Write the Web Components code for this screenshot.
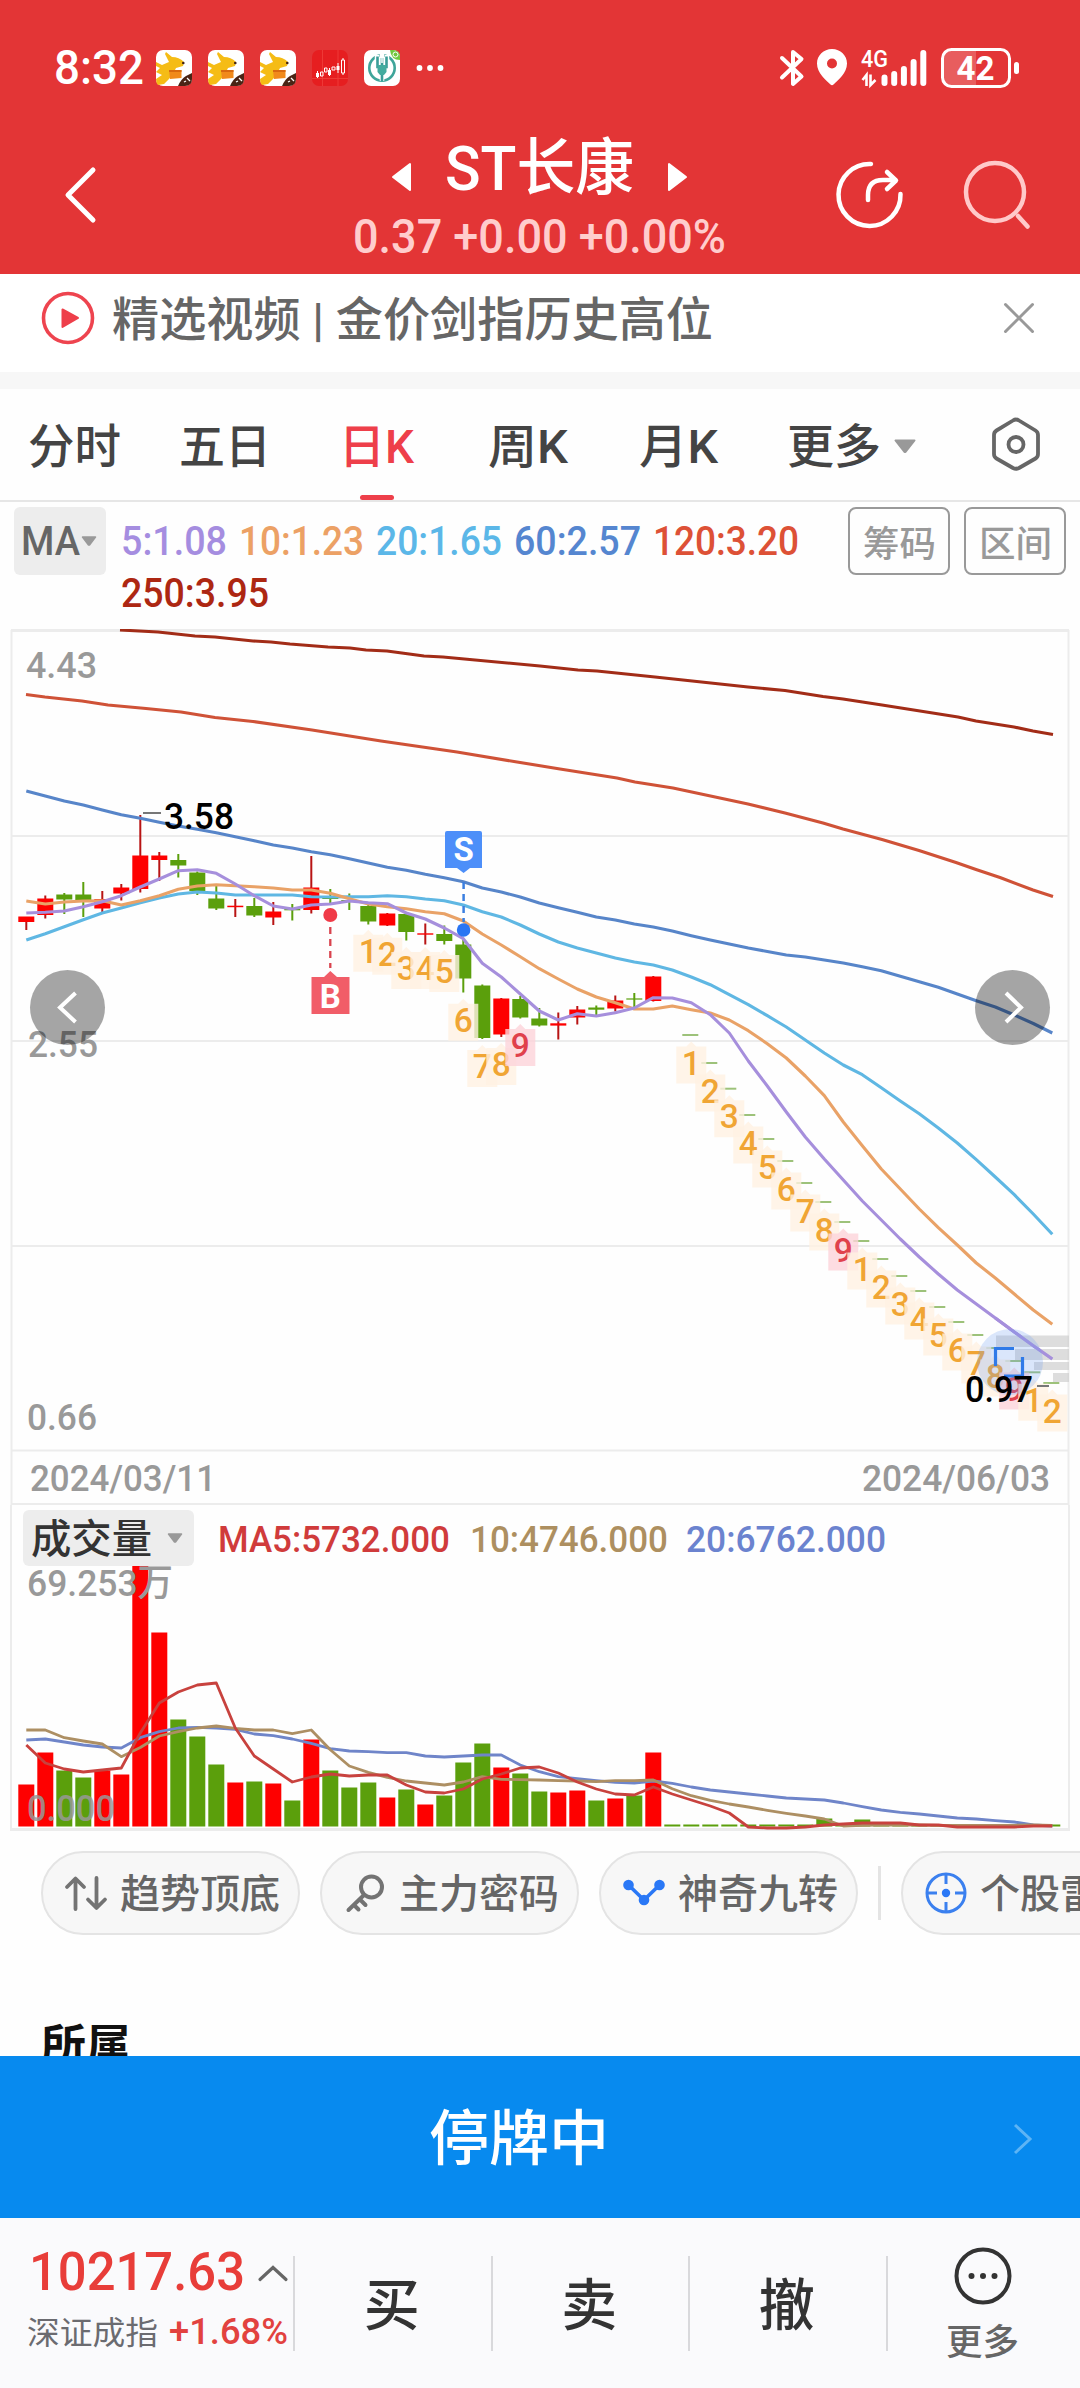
<!DOCTYPE html>
<html lang="zh-CN">
<head>
<meta charset="utf-8">
<title>ST长康</title>
<style>
    body {
        margin: 0;
        width: 1080px;
        height: 2388px;
        overflow: hidden;
        background: #fefefe;
        font-family: Roboto, "Noto Sans CJK SC", sans-serif;
        font-weight: 500;
    }
</style>
</head>
<body>
<stock-page></stock-page>

<script>
const ICONS = {
    courier: [36, 36, `<rect width="36" height="36" rx="7" fill="#fff"/>
        <path d="M0 12 L6 15 L13 12 L9 4 L10 2 L16 7 Q23 7 28 12 L27 16 L20 18 L17 24 L13 29 L8 34 L2 35 Q0 33 0 29 L6 25 L0 22 L4 18 L0 16Z" fill="#f5bc15"/>
        <path d="M13 20 H25.500 V28 L14 29Z" fill="#f18a1b"/><path d="M13 20 H25.500 V22 H13Z" fill="#d9690f"/>
        <circle cx="27.300" cy="13" r="1.300" fill="#402015"/>
        <path d="M36 23 V29 Q36 36 29 36 H22 Q25 29 30 26Z" fill="#4a2415"/><path d="M28 32 l2 -1 M31 28 l3 3" stroke="#fff" stroke-width="1.300"/>`],
    stocks: [36, 36, `<rect width="36" height="36" rx="7" fill="#e61e20"/>
        <path d="M10.500 0 V36 M26 0 V36 M0 28.500 H36" stroke="#f0403c" stroke-width=".8"/>
        <path d="M4 23 h3 v4 h-3z M16 20 h3 v5 h-3z M24.500 16 h3 v4 h-3z" fill="#fff"/>
        <path d="M8.500 22 h2.500 v4 h-2.500z M12.500 18 h2.500 v4 h-2.500z M20 17 h3 v3 h-3z M29.500 10 h3 v13 h-3z M5.500 21 v7 M17.500 18 v8 M26 13 v10 M31 8 v2 M31 23 v2" fill="none" stroke="#fff" stroke-width="1"/>`],
    bank: [36, 36, `<rect width="36" height="36" rx="7" fill="#fff"/>
        <circle cx="18" cy="18" r="12.700" fill="none" stroke="#3fa59a" stroke-width="2.600"/>
        <path d="M13 5 V17 H23 V5 M18 3 V31 M14.500 17 V23 H21.500 V17" fill="none" stroke="#fff" stroke-width="4.500"/>
        <path d="M13.500 6.500 V17 H22.500 V6.500 M18 8 V31" fill="none" stroke="#3a9d98" stroke-width="2.600"/>
        <path d="M13.500 15 H22.500 V22 L20 25 H16 L13.500 22Z" fill="#43ab9e"/><path d="M18 5 V13" stroke="#fff" stroke-width="1.500"/>
        <path d="M26 0 H29 Q36 0 36 7 V10 Q27 10 26 0Z" fill="#72c83f"/><circle cx="31.500" cy="4.500" r="2.500" fill="none" stroke="#fff" stroke-width="1"/>`],
    dots: [28, 8, `<g fill="#fff"><circle cx="3.500" cy="4" r="2.900"/><circle cx="14" cy="4" r="2.900"/><circle cx="24.500" cy="4" r="2.900"/></g>`],
    bluetooth: [24, 38, `<path d="M2 9 L21.500 27.500 L13 35 V3 L21.500 10 L2 28.500" fill="none" stroke="#fff" stroke-width="4" stroke-linejoin="round" stroke-linecap="round"/>`],
    pin: [30, 37, `<path fill-rule="evenodd" d="M15 0 C6.500 0 0 6.500 0 14.500 C0 24 9 31 13.500 35.500 Q15 37 16.500 35.500 C21 31 30 24 30 14.500 C30 6.500 23.500 0 15 0Z M15 9.500 A5 5 0 1 1 15 19.500 A5 5 0 1 1 15 9.500Z" fill="#fff"/>`],
    signal: [68, 38, `<text x="0" y="18" font-size="23.500" font-weight="500" fill="#fff" textLength="27" lengthAdjust="spacingAndGlyphs">4G</text>
        <path d="M5.500 37 V26 L1.500 31 M9.500 25.500 V36 L14.500 31" fill="none" stroke="#fff" stroke-width="2.600"/>
        <path d="M23.500 28.500 V34 M33.200 25 V34 M42.900 20 V34 M52.600 13 V34 M62.300 4 V34" stroke="#fff" stroke-width="6" stroke-linecap="round"/>`],
    battery: [78, 40, `<path d="M10 2 H35 V38 H10 Q2 38 2 30 V10 Q2 2 10 2Z" fill="#fff" opacity=".2"/>
        <rect x="1.500" y="1.500" width="67" height="37" rx="9" fill="none" stroke="#fff" stroke-width="3"/>
        <rect x="73" y="14" width="5" height="12" rx="2.500" fill="#fff"/>
        <text x="15.500" y="32" font-size="34" font-weight="700" fill="#fff" textLength="38" lengthAdjust="spacingAndGlyphs">42</text>`],
    back: [32, 56, `<path d="M29 3 L4 28 L29 53" fill="none" stroke="#fff" stroke-width="5" stroke-linecap="round" stroke-linejoin="round"/>`],
    prev: [20, 30, `<path d="M19 2 V28 L2 15Z" fill="#fff" stroke="#fff" stroke-width="2" stroke-linejoin="round"/>`],
    next: [20, 30, `<path d="M1 2 V28 L18 15Z" fill="#fff" stroke="#fff" stroke-width="2" stroke-linejoin="round"/>`],
    share: [68, 68, `<path d="M35 3 A31 31 0 1 0 64.500 33 M32 39 V34 Q32 19 47 19 H59 M51 11 L60 19.500 L51 28" fill="none" stroke="#fff" stroke-width="4.500" stroke-linecap="round" stroke-linejoin="round"/>`],
    search: [68, 70, `<g fill="none" stroke="#ffc9c9" stroke-width="4.500" stroke-linecap="round"><circle cx="32" cy="32" r="29"/><path d="M55 56 L64.500 66.500"/></g>`],
    play: [54, 54, `<circle cx="27" cy="27" r="24.500" fill="none" stroke="#ee444f" stroke-width="3.600"/><path d="M21.500 18.500 V36 L37 27Z" fill="#ee3f4a" stroke="#ee3f4a" stroke-width="2" stroke-linejoin="round"/>`],
    close: [30, 30, `<path d="M1.500 1.500 L28.500 28.500 M28.500 1.500 L1.500 28.500" stroke="#999" stroke-width="3" stroke-linecap="round"/>`],
    caret: [24, 15, `<path d="M2.500 1.500 H21.500 L12.500 13 H11.500Z" fill="#999" stroke="#999" stroke-width="2" stroke-linejoin="round"/>`],
    caretSmall: [16, 10, `<path d="M1.500 1 H14.500 L8.500 9 H7.500Z" fill="#999" stroke="#999" stroke-width="1.500" stroke-linejoin="round"/>`],
    hexagon: [50, 54, `<g fill="none" stroke="#666" stroke-width="3.800" stroke-linejoin="round"><path d="M22 3.500 Q25 1.500 28 3.500 L44.500 13.500 Q47 15 47 18 V37 Q47 40 44.500 41.500 L28 51 Q25 52.500 22 51 L5.500 41.500 Q3 40 3 37 V18 Q3 15 5.500 13.500Z"/><circle cx="25" cy="27.500" r="7.500"/></g>`],
    trend: [42, 34, `<path d="M10.500 33 V3 M2 11 L10.500 2.500 L19 11 M31.500 2 V31 M23 23.500 L31.500 32 L40 23.500" fill="none" stroke="#737373" stroke-width="3.800" stroke-linecap="round" stroke-linejoin="round"/>`],
    key: [38, 38, `<g fill="none" stroke="#737373" stroke-width="4" stroke-linecap="round"><circle cx="25.500" cy="13" r="10.500"/><path d="M18 21 L2.500 36 M8 31 L12.500 35.500 M14 25.500 L19.500 31"/></g>`],
    nine: [42, 28, `<path d="M5.500 6 L21 21 L36.500 6" fill="none" stroke="#2a78f6" stroke-width="3.500"/><g fill="#2a78f6"><circle cx="5.500" cy="6" r="5.300"/><circle cx="21" cy="21" r="5.300"/><circle cx="36.500" cy="6" r="5.300"/></g>`],
    target: [42, 42, `<g fill="none" stroke="#3b80ef" stroke-width="3"><circle cx="21" cy="21" r="19"/><path d="M21 2 V12 M21 30 V40 M2 21 H12 M30 21 H40"/></g><circle cx="21" cy="21" r="4.200" fill="#2a78f6"/>`],
    forward: [20, 32, `<path d="M2 2 L17 16 L2 30" fill="none" stroke="#5db4f5" stroke-width="3"/>`],
    up: [30, 17, `<path d="M2 14.500 L15 2.500 L28 14.500" fill="none" stroke="#666" stroke-width="3.200" stroke-linecap="round"/>`],
    more: [58, 58, `<circle cx="29" cy="29" r="26.500" fill="none" stroke="#333" stroke-width="4"/><g fill="#333"><circle cx="17.500" cy="29" r="3"/><circle cx="29" cy="29" r="3"/><circle cx="40.500" cy="29" r="3"/></g>`]
};

class UiIcon extends HTMLElement {
    constructor() {
        super();
        const [w, h, body] = ICONS[this.getAttribute('name')];
        this.attachShadow({mode: 'open'});
        this.shadowRoot.innerHTML = `
            <style>
                :host { display: block; flex: none; width: ${w}px; height: ${h}px; }
                svg { display: block; overflow: visible; }
            </style>
            <svg width="${w}" height="${h}" viewBox="0 0 ${w} ${h}">${body}</svg>
        `;
    }
}

// One line of text squeezed or stretched to the width attribute
class FitText extends HTMLElement {
    constructor() {
        super();
        this.attachShadow({mode: 'open'});
        this.shadowRoot.innerHTML = `
            <style>
                :host { display: block; flex: none; width: ${this.getAttribute('width')}px; }
                span { display: inline-block; white-space: nowrap; transform-origin: 0 50%; }
            </style>
            <span><slot></slot></span>
        `;
    }

    connectedCallback() {
        const span = this.shadowRoot.querySelector('span');
        const natural = span.getBoundingClientRect().width;
        if (natural) span.style.transform = `scaleX(${this.getAttribute('width') / natural})`;
    }
}

function define(name, html) {
    customElements.define(name, class extends HTMLElement {
        constructor() {
            super();
            this.attachShadow({mode: 'open'});
            this.shadowRoot.innerHTML = html;
        }
    });
}

define('status-bar', `
    <style>
        :host { display: flex; align-items: center; height: 135px; padding: 0 61px 0 54px; color: #fff; }
        fit-text { font-size: 48px; line-height: 60px; margin-right: 12px; }
        .apps, .system { display: flex; align-items: center; }
        .apps { gap: 16px; }
        .system { margin-left: auto; }
    </style>
    <fit-text width="90">8:32</fit-text>
    <div class="apps">
        <ui-icon name="courier"></ui-icon><ui-icon name="courier"></ui-icon><ui-icon name="courier"></ui-icon>
        <ui-icon name="stocks"></ui-icon><ui-icon name="bank"></ui-icon><ui-icon name="dots"></ui-icon>
    </div>
    <div class="system">
        <ui-icon name="bluetooth"></ui-icon>
        <ui-icon name="pin" style="margin-left:13px"></ui-icon>
        <ui-icon name="signal" style="margin-left:14px"></ui-icon>
        <ui-icon name="battery" style="margin-left:12px"></ui-icon>
    </div>
`);

define('title-bar', `
    <style>
        :host { display: flex; height: 139px; padding: 0 49px 0 64px; }
        .side { display: flex; align-items: center; height: 120px; gap: 59px; }
        .title { width: 373px; margin-left: 257px; margin-right: 110px; }
        .name { display: flex; align-items: center; justify-content: space-between; height: 67px; padding: 0 38px; }
        .name fit-text { font-size: 62px; line-height: 66px; color: #fff; }
        .name ui-icon { margin-top: 17px; }
        .quote { font-size: 48px; line-height: 69px; color: #ffcdcd; }
    </style>
    <div class="side"><ui-icon name="back"></ui-icon></div>
    <div class="title">
        <div class="name">
            <ui-icon name="prev"></ui-icon>
            <fit-text width="189">ST长康</fit-text>
            <ui-icon name="next"></ui-icon>
        </div>
        <fit-text class="quote" width="373">0.37 +0.00 +0.00%</fit-text>
    </div>
    <div class="side"><ui-icon name="share"></ui-icon><ui-icon name="search"></ui-icon></div>
`);

define('news-strip', `
    <style>
        :host { display: flex; align-items: center; height: 98px; padding: 0 46px 0 41px; border-bottom: 17px solid #f7f7f7; background: #fff; }
        ui-icon { margin-top: -10px; }
        ui-icon[name=close] { margin-left: auto; }
        fit-text { margin: -7px 0 0 17px; font-size: 47px; line-height: 60px; color: #666; }
    </style>
    <ui-icon name="play"></ui-icon>
    <fit-text width="601"><slot></slot></fit-text>
    <ui-icon name="close"></ui-icon>
`);

class PeriodTab extends HTMLElement {
    constructor() {
        super();
        const active = this.hasAttribute('active');
        this.attachShadow({mode: 'open'});
        this.shadowRoot.innerHTML = `
            <style>
                :host { display: flex; flex-direction: column; align-items: center; height: 111px; margin-right: 71px; color: ${active ? '#ee3f4a' : '#444'}; }
                fit-text { font-size: 47px; line-height: 60px; margin-top: 28px; }
                i { width: 34px; height: 5px; margin-top: auto; border-radius: 3px; background: ${active ? '#ee3f4a' : 'none'}; }
            </style>
            <fit-text width="${this.getAttribute('width')}"><slot></slot></fit-text><i></i>
        `;
    }
}

define('period-tabs', `
    <style>
        :host { display: flex; height: 111px; padding: 0 39px 0 28px; border-bottom: 2px solid #e6e6e6; }
        .first { margin-right: 58px; }
        .day { margin-right: 74px; }
        .more { margin-right: 0; }
        ui-icon[name=caret] { margin: 50px 0 0 12px; }
        ui-icon[name=hexagon] { margin: 28px 0 0 auto; }
    </style>
    <period-tab width="93" class="first">分时</period-tab>
    <period-tab width="92" style="margin-right:68px">五日</period-tab>
    <period-tab width="75" class="day" active>日K</period-tab>
    <period-tab width="80">周K</period-tab>
    <period-tab width="79" style="margin-right:69px">月K</period-tab>
    <period-tab width="94" class="more">更多</period-tab>
    <ui-icon name="caret"></ui-icon>
    <ui-icon name="hexagon"></ui-icon>
`);

define('ma-legend', `
    <style>
        :host { display: flex; align-items: flex-start; height: 127px; padding: 0 14px; box-sizing: border-box; }
        .select, .button { display: flex; align-items: center; box-sizing: border-box; height: 68px; margin-top: 5px; }
        .select { width: 92px; padding-left: 7px; gap: 1px; border-radius: 6px; background: #ededed; color: #666; font-size: 40px; }
        .values { display: flex; flex-wrap: wrap; column-gap: 12px; flex: 1; margin: 14px 0 0 15px; font-size: 40px; line-height: 52px; }
        .button { justify-content: center; width: 102px; margin-left: 14px; border: 2px solid #999; border-radius: 8px; color: #999; font-size: 36px; }
    </style>
    <div class="select"><fit-text width="59">MA</fit-text><ui-icon name="caretSmall"></ui-icon></div>
    <div class="values">
        <fit-text width="106" style="color:#a58de0">5:1.08</fit-text>
        <fit-text width="125" style="color:#eca165">10:1.23</fit-text>
        <fit-text width="126" style="color:#5bb7e8">20:1.65</fit-text>
        <fit-text width="127" style="color:#5586d0">60:2.57</fit-text>
        <fit-text width="146" style="color:#dd5136">120:3.20</fit-text>
        <fit-text width="148" style="color:#ad2712">250:3.95</fit-text>
    </div>
    <div class="button"><fit-text width="73">筹码</fit-text></div>
    <div class="button"><fit-text width="73">区间</fit-text></div>
`);

const RED = '#fe0000';
const GREEN = '#5b9f0c';
const colX = i => 26.3 + i * 19;
const line = (ys, color, width = 3.1) =>
    `<polyline points="${ys.map((y, i) => `${colX(i)},${y}`).join(' ')}" fill="none" stroke="${color}" stroke-width="${width}" stroke-linejoin="round"/>`;
const label = (x, y, w, text, extra = 'fill="#999"') =>
    `<text x="${x}" y="${y}" textLength="${w}" lengthAdjust="spacingAndGlyphs" ${extra}>${text}</text>`;

// direction, body top, body bottom, wick top, wick bottom
const CANDLES = [
    ['r', 916.5, 922, 917, 930], ['r', 898.5, 915, 895.5, 918.5], ['g', 894.5, 899.5, 893, 914], ['g', 894.5, 901, 882, 917],
    ['r', 899, 908.5, 891, 912], ['r', 887.5, 893.5, 884, 900.5], ['r', 855.5, 889, 815, 892.5], ['r', 855.5, 860, 852, 881],
    ['g', 860, 865.5, 854, 877.5], ['g', 872.5, 891, 871.5, 895], ['g', 898.5, 908.5, 885, 910], ['r', 905.7, 907.2, 899, 917],
    ['g', 906, 915.5, 898, 917], ['r', 911.5, 917.5, 902, 925], ['g', 909, 910.3, 904, 920.5], ['r', 887.5, 910, 856, 913.5],
    ['g', 897.5, 899, 889, 903], ['g', 900, 901.5, 893.5, 910], ['g', 906, 921.5, 905, 924.5], ['r', 913.5, 925.5, 913, 926],
    ['g', 914, 932, 913, 940.5], ['r', 933.3, 934.7, 923.5, 944.5], ['g', 934, 941, 925.5, 944.5], ['g', 944.5, 978.5, 940, 992.5],
    ['g', 985.5, 1038, 984.5, 1039], ['r', 998.5, 1034.5, 998, 1037], ['g', 999, 1017.5, 996, 1018.5], ['g', 1018.5, 1025.5, 1008, 1026.5],
    ['r', 1023.3, 1025.6, 1012.5, 1039.5], ['r', 1009.5, 1017.5, 1006, 1024.5], ['g', 1007.5, 1009.7, 1005.5, 1015.5], ['r', 1000.5, 1008.5, 995.5, 1011.5],
    ['g', 998.4, 999.6, 993, 1008], ['r', 976.5, 1001, 976, 1001.5]
];
const LIMIT_DOWN = [1035, 1063, 1088.7, 1115, 1139, 1161, 1183, 1202, 1222, 1241, 1259, 1276, 1291, 1307, 1322, 1335, 1348, 1361, 1372.3, 1383];
const MA5 = [913, 912.3, 911, 906.7, 901.7, 895.7, 887, 879, 870.7, 869.7, 873.3, 884, 895.7, 906, 909, 905, 904, 901, 902.7, 903.7, 913, 919, 928, 938.7, 963.3, 977, 994, 1011, 1020, 1013.7, 1016, 1012.7, 1008, 997.7, 998, 1002.7, 1014.7, 1033, 1061, 1086, 1112, 1137, 1159, 1180, 1201, 1220, 1239, 1257, 1274, 1290, 1304, 1318, 1332, 1345.7, 1359];
const MA10 = [901, 904, 902, 901, 900.7, 905, 900.7, 895.7, 889.3, 886, 884.7, 885.7, 886.7, 888, 890, 890, 893.3, 898.7, 904, 906.7, 908.7, 911.7, 913.7, 921, 934, 945, 956.7, 968.7, 979, 989, 997, 1002.7, 1009, 1009, 1006, 1009.7, 1013, 1020, 1030.7, 1043.7, 1058, 1076, 1095.7, 1122, 1145.7, 1169, 1189, 1209, 1227.7, 1245, 1263, 1278, 1294, 1310, 1324.3];
const MA20 = [940, 933.7, 926.7, 919.7, 913, 908, 902.7, 898, 894, 892, 893, 895, 895, 895, 895, 896.7, 897, 896.7, 896.7, 895.7, 896.7, 899, 900.7, 905, 911.7, 917, 925, 934, 942, 948, 953, 958, 962, 965, 970, 977, 984.7, 994.7, 1004.7, 1015.7, 1027, 1040, 1053, 1065, 1074.7, 1087.7, 1101, 1113.7, 1128, 1143, 1159.7, 1177, 1194.7, 1214, 1234.3];
const MA60 = [791, 796, 801, 805, 810, 814.7, 818.3, 822.3, 826, 829.3, 832.7, 836.7, 840.7, 845, 848, 851.7, 854.7, 858.7, 863, 867.3, 870.3, 874.3, 877.7, 881.7, 888, 892, 897, 903, 907.7, 912.3, 917, 920, 924, 927, 931, 935.7, 940, 944, 948, 951.5, 955, 957, 960, 963, 966.7, 970.7, 976.3, 981.7, 987.3, 994, 1000.7, 1007, 1015, 1023.5, 1033];

// column, baseline and digit of the nine-turn marks
const TURNS = [
    [18, 962.7, 1], [19, 965.7, 2], [20, 980, 3], [21, 980, 4], [22, 983, 5], [23, 1031.7, 6], [24, 1078, 7], [25, 1076, 8], [26, 1057, 9],
    ...LIMIT_DOWN.map((y, i) => [35 + i, y + 39.5, i % 9 + 1])
];

class PriceChart extends HTMLElement {
    constructor() {
        super();
        this.attachShadow({mode: 'open'});
        this.shadowRoot.innerHTML = `
            <style>
                :host { display: block; height: 876px; }
                svg { display: block; font-size: 37px; font-weight: 500; }
            </style>
            <svg width="1080" height="876" viewBox="0 629 1080 876">
                ${this.grid()}
                ${this.candles()}
                ${line(MA20, '#5fb7e3')}
                ${line(MA10, '#e9a267')}
                ${line(MA5, '#a68fdc')}
                ${line(MA60, '#5785c9')}
                <g fill="none" stroke-width="3.1" stroke-linejoin="round">
                    <polyline stroke="#cf5237" points="26,694.5 45,697 82,701 108,705 146,708.500 181,712 215,717.500 253,721.500 312,730 381,741 457,752 514,761.500 560,769 617,778 635,782 673,788 748,804 785,813 823,823 843,829 882,839.500 919,850.500 956,862.500 976,869.500 1000,877.500 1033,890 1053,896.500"/>
                    <polyline stroke="#a22c17" points="120,630 158,632 195,636 215,637 253,641 271,642 290,644 328,647 350,648 366,650 387,651 424,656 443,657 540,666 578,670 597,671 655,677 748,687 785,690.500 823,696.500 843,699 882,705 958,717 976,721 1014,727 1033,731 1053,734.500"/>
                </g>
                ${this.turns()}
                ${this.trades()}
                ${this.extremes()}
                ${label(26, 678, 71, '4.43')}
                ${label(28, 1057, 70, '2.55')}
                ${label(27, 1430, 70, '0.66')}
                ${label(30, 1491, 186, '2024/03/11')}
                ${label(862, 1491, 188, '2024/06/03')}
                ${this.pager(67.5, 'M75.500 993 L60 1007.500 L75.500 1022')}
                ${this.pager(1012.5, 'M1006 993 L1021 1007.500 L1006 1022')}
            </svg>
        `;
    }

    grid() {
        return `<g fill="none" stroke="#ececec" stroke-width="2">
            <path d="M11 630.500 H1069" stroke-width="3"/>
            <path d="M11.500 630 V1505 M1068.500 630 V1505 M11 836 H1069 M11 1041 H1069 M11 1246 H1069 M11 1450.500 H1069 M11 1504 H1069"/>
        </g>`;
    }

    candles() {
        const bodies = CANDLES.map(([dir, top, bottom, high, low], i) => {
            const x = colX(i);
            return `<path d="M${x} ${high} V${low}" stroke="${dir === 'r' ? '#b81414' : GREEN}" stroke-width="2"/>
                <rect x="${x - 8}" y="${top}" width="16" height="${bottom - top}" fill="${dir === 'r' ? RED : GREEN}"/>`;
        }).join('');
        const ticks = LIMIT_DOWN.map((y, i) => `<path d="M${colX(i + 35) - 9} ${y} h16" stroke="#9dc27a" stroke-width="2"/>`).join('');
        return bodies + ticks;
    }

    turns() {
        return TURNS.map(([col, y, n]) => {
            const x = colX(col);
            const last = n === 9;
            return `<path d="M${x - 15} ${y - 28} H${x - 5} L${x} ${y - 33} L${x + 5} ${y - 28} H${x + 15} V${y + 9} H${x - 15}Z" fill="${last ? '#fdd3d9' : '#fff1e2'}" fill-opacity=".8"/>
                <text x="${x}" y="${y}" text-anchor="middle" font-size="33.500" font-weight="500" fill="${last ? '#e0414c' : '#f0a534'}">${n}</text>`;
        }).join('');
    }

    trades() {
        return `
            <path d="M463.600 882 V922" stroke="#3b7fe0" stroke-width="2.500" stroke-dasharray="7 5"/>
            <circle cx="463.600" cy="930" r="6.800" fill="#2a75f3"/>
            <path d="M447 831 H480 Q482 831 482 833 V868 H470 L463.600 873 L457 868 H445 V833 Q445 831 447 831Z" fill="#4d8ff9"/>
            <text x="463.600" y="861" text-anchor="middle" font-size="33" font-weight="700" fill="#fff">S</text>
            <path d="M330.300 927 V968" stroke="#d9434e" stroke-width="2.300" stroke-dasharray="7 5"/>
            <circle cx="330.300" cy="915" r="7" fill="#f03a47"/>
            <path d="M311.500 977 H324 L330.300 971 L337 977 H349.500 V1014 H311.500Z" fill="#f15d68"/>
            <text x="330.300" y="1007.500" text-anchor="middle" font-size="33" font-weight="700" fill="#fff">B</text>
        `;
    }

    extremes() {
        return `
            <path d="M996 1335.500 h73 v11.500 h-73z M1015 1349 h54 v11 h-54z M1034 1362 h35 v8 h-35z M1053 1373 h16 v9 h-16z" fill="#cfcfcf" opacity=".7"/>
            ${line(MA5.map(y => y), '#a68fdc').replace(/points="[^"]*"/, `points="${[51, 52, 53, 54].map(i => `${colX(i)},${MA5[i]}`).join(' ')}"`)}
            <circle cx="1010" cy="1362" r="33" fill="#6f9ff2" opacity=".25"/>
            <path d="M143 813 H161 M1037 1386 H1049" stroke="#777" stroke-width="1.800"/>
            <path d="M995.500 1366 V1348.500 H1014 M1022.500 1357 V1376 H1004" fill="none" stroke="#2f7ae8" stroke-width="3.200"/>
            ${label(164, 829, 70, '3.58', 'fill="#000"')}
            ${label(965, 1402, 68, '0.97', 'fill="#000"')}
        `;
    }

    pager(x, chevron) {
        return `<circle cx="${x}" cy="1007.500" r="37.500" fill="#000" fill-opacity=".35"/>
            <path d="${chevron}" fill="none" stroke="#fff" stroke-width="4"/>`;
    }
}

const VOLUMES = [
    ['r', 1784.5], ['r', 1752.5], ['g', 1770.5], ['g', 1777.5], ['r', 1770.5], ['r', 1774.5], ['r', 1566], ['r', 1632.5], ['g', 1719.5], ['g', 1736.5],
    ['g', 1764.5], ['r', 1782.5], ['g', 1781.5], ['r', 1783.5], ['g', 1800.5], ['r', 1739.5], ['g', 1770.5], ['g', 1787.5], ['g', 1782.5], ['r', 1797.5],
    ['g', 1789.5], ['r', 1804.5], ['g', 1795.5], ['g', 1762.5], ['g', 1743.5], ['r', 1767.5], ['g', 1773.5], ['g', 1791.5], ['r', 1792.5], ['r', 1790.5],
    ['g', 1800.5], ['r', 1798.5], ['g', 1795.5], ['r', 1752.5]
];
for (let i = 34; i < 55; i++) VOLUMES.push(['g', {42: 1818.5, 44: 1819.5}[i] || 1824.5]);
const VOL5 = [1745, 1763, 1769, 1772, 1770, 1768, 1733, 1703, 1692, 1685, 1683, 1728, 1756, 1769, 1782, 1777, 1774, 1776, 1775, 1775, 1785, 1792, 1793, 1789, 1779, 1774, 1768, 1767, 1773, 1782, 1789, 1794, 1795, 1787, 1794, 1800, 1806, 1813, 1827, 1828, 1828, 1827, 1825, 1824, 1823, 1823, 1823, 1825, 1825, 1827, 1827, 1827, 1827, 1826, 1826];
const VOL10 = [1730, 1730, 1737.7, 1741, 1744, 1756.7, 1747.5, 1736, 1731.7, 1728, 1726, 1728.3, 1730, 1730, 1733.7, 1730, 1749.7, 1766, 1772.3, 1777.3, 1781, 1783, 1785, 1782, 1776.7, 1779.3, 1779.7, 1780, 1780.7, 1781, 1781.7, 1780.7, 1780.7, 1780, 1788.7, 1795.7, 1800.3, 1804, 1807, 1810.3, 1813.3, 1816, 1819, 1826, 1825.3, 1825, 1825, 1825, 1825.3, 1825.3, 1825.3, 1825.3, 1825.3, 1825, 1825.3];
const VOL20 = [1740, 1739, 1742, 1745, 1747, 1748, 1737.7, 1731.7, 1728, 1727.3, 1728, 1729.3, 1734, 1735.7, 1739, 1743.3, 1748.7, 1751, 1751.7, 1752.7, 1752.7, 1756, 1757, 1756, 1755, 1755, 1765, 1771.7, 1776.7, 1778.7, 1780.7, 1782.3, 1783, 1781, 1783.3, 1787, 1790, 1792, 1794, 1796, 1798, 1799, 1800, 1803, 1806.7, 1810, 1812.3, 1814, 1816, 1818, 1819, 1820.7, 1822, 1825, 1826];

class VolumeChart extends HTMLElement {
    constructor() {
        super();
        const bars = VOLUMES.map(([dir, top], i) =>
            `<rect x="${colX(i) - 8}" y="${top}" width="16" height="${1826.5 - top}" fill="${dir === 'r' ? RED : GREEN}"/>`).join('');
        this.attachShadow({mode: 'open'});
        this.shadowRoot.innerHTML = `
            <style>
                :host { display: block; margin: 0 10px; height: 323px; border: solid #ececec; border-width: 0 2px 3px; }
                .head { display: flex; align-items: center; height: 61px; padding-left: 11px; font-size: 37px; line-height: 44px; }
                .select { display: flex; align-items: center; box-sizing: border-box; width: 171px; height: 56px; margin: 5px 24px 0 0; padding-left: 8px; gap: 15px; border-radius: 6px; background: #ededed; color: #333; font-size: 40px; }
                .select fit-text { margin-top: 3px; }
                .head > fit-text { margin-top: 8px; }
                svg { display: block; overflow: visible; font-size: 37px; font-weight: 500; }
            </style>
            <div class="head">
                <div class="select"><fit-text width="121">成交量</fit-text><ui-icon name="caretSmall"></ui-icon></div>
                <fit-text width="232" style="color:#d03b3b">MA5:5732.000</fit-text>
                <fit-text width="198" style="color:#ad8f60;margin-left:20px">10:4746.000</fit-text>
                <fit-text width="200" style="color:#6b83cf;margin-left:18px">20:6762.000</fit-text>
            </div>
            <svg width="1056" height="262" viewBox="12 1566 1056 262">
                ${bars}
                ${line(VOL20, '#6f85c9', 2.8)}
                ${line(VOL10, '#ad8f63', 2.8)}
                ${line(VOL5, '#c8423e', 2.8)}
                ${label(27, 1596, 146, '69.253万')}
                ${label(27, 1821, 88, '0.000', 'fill="#999" fill-opacity=".85"')}
            </svg>
        `;
    }
}

class ToolPill extends HTMLElement {
    constructor() {
        super();
        this.attachShadow({mode: 'open'});
        this.shadowRoot.innerHTML = `
            <style>
                :host { display: flex; flex: none; align-items: center; box-sizing: border-box; width: 259px; height: 84px; padding-left: 21px; border: 2px solid #e4e4e4; border-radius: 42px; background: #f7f7f7; }
                .icon { display: flex; justify-content: center; width: 44px; margin-right: 12px; }
                fit-text { font-size: 40px; line-height: 50px; margin-top: 3px; color: #666; }
            </style>
            <div class="icon"><ui-icon name="${this.getAttribute('icon')}"></ui-icon></div>
            <fit-text width="160"><slot></slot></fit-text>
        `;
    }
}

define('tool-row', `
    <style>
        :host { display: flex; align-items: center; gap: 20px; height: 84px; padding: 20px 0 0 41px; overflow: hidden; }
        i { flex: none; width: 3px; height: 54px; background: #e4e4e4; }
    </style>
    <tool-pill icon="trend">趋势顶底</tool-pill>
    <tool-pill icon="key">主力密码</tool-pill>
    <tool-pill icon="nine">神奇九转</tool-pill>
    <i></i>
    <tool-pill icon="target">个股雷达</tool-pill>
`);

define('suspend-banner', `
    <style>
        :host { display: flex; align-items: center; justify-content: space-between; box-sizing: border-box; height: 162px; padding: 0 47px 0 429px; background: #078aef; color: #fff; }
        fit-text { margin-top: 6px; font-size: 60px; line-height: 80px; }
        ui-icon { margin-top: 3px; }
    </style>
    <fit-text width="180"><slot></slot></fit-text>
    <ui-icon name="forward"></ui-icon>
`);

define('trade-bar', `
    <style>
        :host { display: flex; height: 170px; background: #fafafc; }
        .index { width: 293px; box-sizing: border-box; padding: 25px 0 0 27px; }
        .row { display: flex; align-items: center; }
        .price { font-size: 54px; line-height: 58px; color: #e83d39; margin-left: 2px; }
        .row ui-icon { margin: 2px 0 0 13px; }
        .second { margin-top: 4px; line-height: 52px; }
        .name { font-size: 32px; color: #6b6b70; font-weight: 400; margin-top: 2px; }
        .change { font-size: 37px; margin-left: 11px; color: #e2423f; }
        .action { display: flex; align-items: center; justify-content: center; width: 195.500px; height: 95px; margin-top: 38px; border-left: 2px solid #d9d9dc; font-size: 56px; line-height: 80px; color: #333; }
        .action > span { margin: 5px 2px 0 0; }
        .more { flex-direction: column; justify-content: flex-start; flex: 1; font-size: 36px; line-height: 44px; color: #666; }
        .more ui-icon { margin: -9px 2px 0 0; }
        .more fit-text { margin: 16px 2px 0 0; }
    </style>
    <div class="index">
        <div class="row"><fit-text class="price" width="216">10217.63</fit-text><ui-icon name="up"></ui-icon></div>
        <div class="row second"><fit-text class="name" width="131">深证成指</fit-text><fit-text class="change" width="119">+1.68%</fit-text></div>
    </div>
    <div class="action"><span>买</span></div>
    <div class="action"><span>卖</span></div>
    <div class="action"><span>撤</span></div>
    <div class="action more"><ui-icon name="more"></ui-icon><fit-text width="73">更多</fit-text></div>
`);

define('stock-page', `
    <style>
        :host { display: flex; flex-direction: column; height: 2388px; }
        header { background: #e33536; }
        .belong { flex: 1; min-height: 0; overflow: hidden; padding: 82px 0 0 41px; font-size: 45px; line-height: 60px; font-weight: 700; color: #111; }
    </style>
    <header>
        <status-bar></status-bar>
        <title-bar></title-bar>
    </header>
    <news-strip>精选视频 | 金价剑指历史高位</news-strip>
    <period-tabs></period-tabs>
    <ma-legend></ma-legend>
    <price-chart></price-chart>
    <volume-chart></volume-chart>
    <tool-row></tool-row>
    <div class="belong"><fit-text width="90">所属</fit-text></div>
    <suspend-banner>停牌中</suspend-banner>
    <trade-bar></trade-bar>
`);

customElements.define('period-tab', PeriodTab);
customElements.define('price-chart', PriceChart);
customElements.define('volume-chart', VolumeChart);
customElements.define('tool-pill', ToolPill);
customElements.define('ui-icon', UiIcon);
customElements.define('fit-text', FitText);
</script>
</body>
</html>
